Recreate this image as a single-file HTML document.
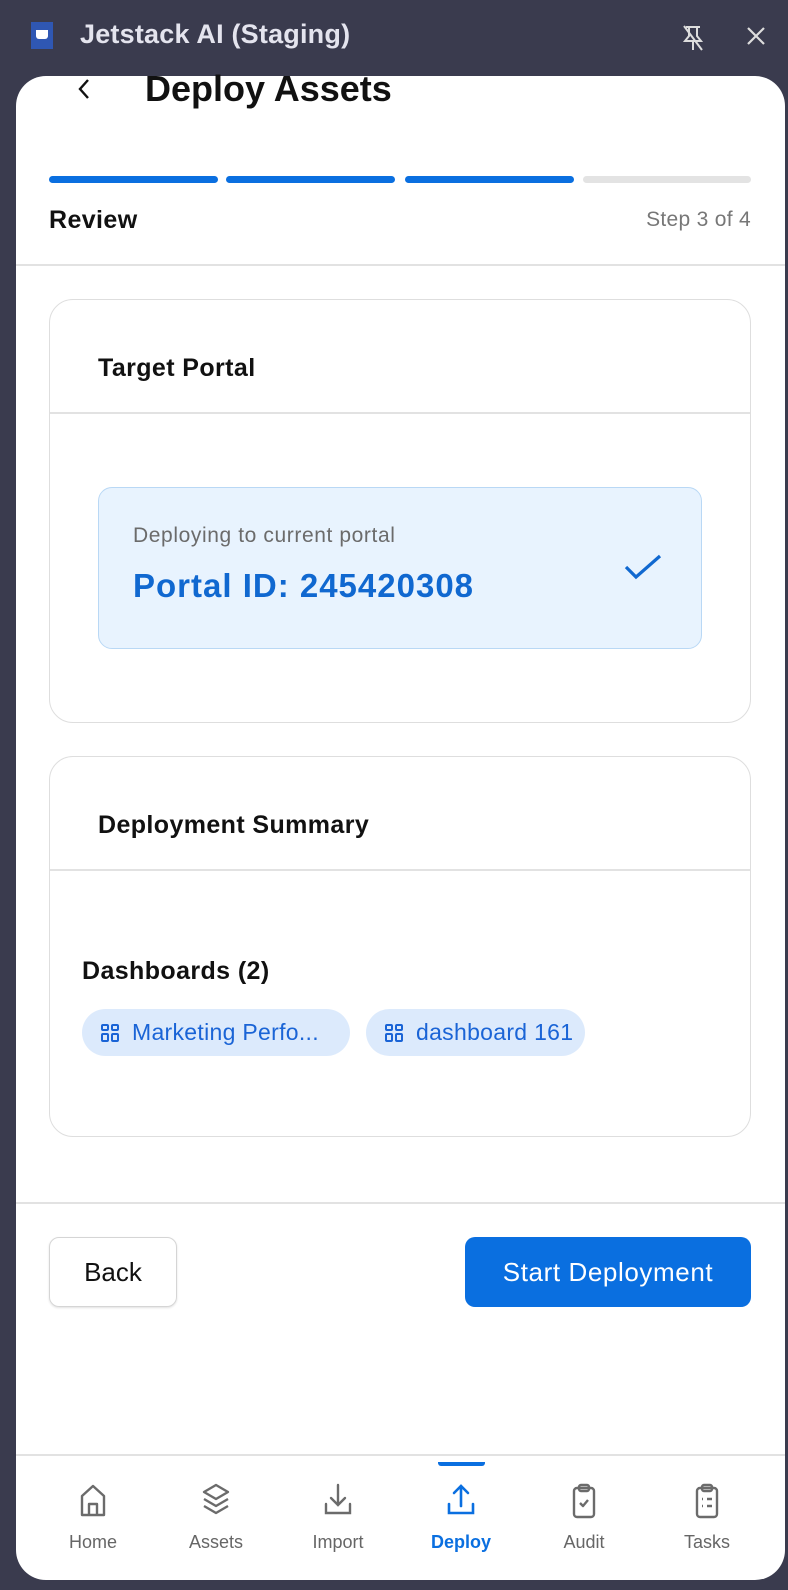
<!DOCTYPE html>
<html><head><meta charset="utf-8"><style>
*{margin:0;padding:0;box-sizing:border-box}
body{width:788px;height:1590px;background:#3a3b4e;font-family:"Liberation Sans",sans-serif;position:relative;overflow:hidden;color:#111}
.a{position:absolute}
.panel{left:16px;top:76px;width:769px;height:1504px;background:#fff;border-radius:30px;overflow:hidden}
.bar{height:7px;border-radius:4px;top:176px}
.card{left:49px;width:702px;border:1.5px solid #dedede;border-radius:24px;background:#fff}
.h{font-weight:bold;font-size:25px;letter-spacing:.4px}
.chip{height:47px;top:1009px;background:#dceafc;border-radius:24px;color:#1a64d6;font-size:23px;letter-spacing:.3px;display:flex;align-items:center;padding-left:18px;gap:12px}
.nav{top:1532px;font-size:18px;color:#666;width:100px;text-align:center;margin-left:-50px}
.ic{top:1482px;margin-left:-17px}
</style></head><body>
<div class="a" style="left:31px;top:22px;width:22px;height:27px;background:#2f57b3"></div>
<div class="a" style="left:36px;top:30px;width:12px;height:9px;background:#fff;border-radius:0 0 3px 3px"></div>
<div class="a" style="left:80px;top:19px;font-size:27px;font-weight:bold;color:#e4e4ee;letter-spacing:.2px">Jetstack AI (Staging)</div>
<svg class="a" style="left:680px;top:24px" width="26" height="28" viewBox="0 0 26 28" fill="none" stroke="#ddd" stroke-width="2"><path d="M6 3h14M9 3v9l-4 5h16l-4-5V3M13 17v9M4 2l18 24"/></svg>
<svg class="a" style="left:746px;top:26px" width="20" height="20" viewBox="0 0 20 20" stroke="#ddd" stroke-width="2.2"><path d="M2 2l16 16M18 2L2 18"/></svg>
<div class="a panel"></div>
<svg class="a" style="left:76px;top:78px" width="16" height="22" viewBox="0 0 16 22" fill="none" stroke="#111" stroke-width="2.4"><path d="M12 2L4 11l8 9"/></svg>
<div class="a" style="left:145px;top:68px;font-size:36px;font-weight:bold">Deploy Assets</div>
<div class="a bar" style="left:49px;width:169px;background:#0a6fe0"></div>
<div class="a bar" style="left:226px;width:169px;background:#0a6fe0"></div>
<div class="a bar" style="left:405px;width:169px;background:#0a6fe0"></div>
<div class="a bar" style="left:583px;width:168px;background:#e3e3e3"></div>
<div class="a h" style="left:49px;top:206px">Review</div>
<div class="a" style="right:37px;top:208px;font-size:21px;color:#777;letter-spacing:.3px">Step 3 of 4</div>
<div class="a" style="left:16px;top:264px;width:769px;height:1.5px;background:#e2e2e2"></div>

<div class="a card" style="top:299px;height:424px"></div>
<div class="a h" style="left:98px;top:354px">Target Portal</div>
<div class="a" style="left:50px;top:412px;width:700px;height:1.5px;background:#e2e2e2"></div>
<div class="a" style="left:98px;top:487px;width:604px;height:162px;background:#e8f3fe;border:1.5px solid #b9d8f5;border-radius:14px"></div>
<div class="a" style="left:133px;top:524px;font-size:21px;color:#6b6b6b;letter-spacing:.6px">Deploying to current portal</div>
<div class="a" style="left:133px;top:567px;font-size:33px;font-weight:bold;color:#1068d0;letter-spacing:1px">Portal ID: 245420308</div>
<svg class="a" style="left:623px;top:553px" width="40" height="28" viewBox="0 0 40 28" fill="none" stroke="#1068d0" stroke-width="3.2"><path d="M3 14l10 10L37 3"/></svg>

<div class="a card" style="top:756px;height:381px"></div>
<div class="a h" style="left:98px;top:811px">Deployment Summary</div>
<div class="a" style="left:50px;top:869px;width:700px;height:1.5px;background:#e2e2e2"></div>
<div class="a h" style="left:82px;top:957px">Dashboards (2)</div>
<div class="a chip" style="left:82px;width:268px"><svg width="20" height="20" viewBox="0 0 20 20" fill="none" stroke="#1a64d6" stroke-width="2"><rect x="2" y="2" width="6" height="5" rx="1"/><rect x="12" y="2" width="6" height="5" rx="1"/><rect x="2" y="11" width="6" height="7" rx="1"/><rect x="12" y="11" width="6" height="7" rx="1"/></svg>Marketing Perfo...</div>
<div class="a chip" style="left:366px;width:219px"><svg width="20" height="20" viewBox="0 0 20 20" fill="none" stroke="#1a64d6" stroke-width="2"><rect x="2" y="2" width="6" height="5" rx="1"/><rect x="12" y="2" width="6" height="5" rx="1"/><rect x="2" y="11" width="6" height="7" rx="1"/><rect x="12" y="11" width="6" height="7" rx="1"/></svg>dashboard 161</div>

<div class="a" style="left:16px;top:1202px;width:769px;height:1.5px;background:#e2e2e2"></div>
<div class="a" style="left:49px;top:1237px;width:128px;height:70px;border:1.5px solid #d5d5d5;border-radius:10px;box-shadow:0 1px 2px rgba(0,0,0,.12);font-size:26px;display:flex;align-items:center;justify-content:center">Back</div>
<div class="a" style="left:465px;top:1237px;width:286px;height:70px;background:#0a6fe0;border-radius:10px;color:#fff;font-size:26px;letter-spacing:.6px;display:flex;align-items:center;justify-content:center">Start Deployment</div>

<div class="a" style="left:16px;top:1454px;width:769px;height:1.5px;background:#e2e2e2"></div>
<div class="a" style="left:438px;top:1462px;width:47px;height:4px;background:#0a6fe0;border-radius:0 0 3px 3px"></div>
<svg class="a ic" style="left:93px" width="34" height="36" viewBox="0 0 34 36" fill="none" stroke="#6b6b6b" stroke-width="2.4" stroke-linejoin="round"><path d="M6 33V14L17 4l11 10v19zM13 33V22h8v11"/></svg>
<svg class="a ic" style="left:216px" width="34" height="38" viewBox="0 0 34 38" fill="none" stroke="#6b6b6b" stroke-width="2.4" stroke-linejoin="round"><path d="M17 3L5 10l12 7 12-7zM5 17l12 7 12-7M5 24l12 7 12-7"/></svg>
<svg class="a ic" style="left:338px" width="34" height="36" viewBox="0 0 34 36" fill="none" stroke="#6b6b6b" stroke-width="2.4" stroke-linecap="round"><path d="M17 3v20M10 16l7 7 7-7M5 22v9h24v-9"/></svg>
<svg class="a ic" style="left:461px" width="34" height="36" viewBox="0 0 34 36" fill="none" stroke="#0a6fe0" stroke-width="2.6" stroke-linecap="round"><path d="M17 24V4M10 11l7-7 7 7M5 22v9h24v-9"/></svg>
<svg class="a ic" style="left:584px" width="34" height="38" viewBox="0 0 34 38" fill="none" stroke="#6b6b6b" stroke-width="2.4" stroke-linejoin="round"><rect x="7" y="6" width="20" height="29" rx="3"/><rect x="12" y="3" width="10" height="6" rx="2"/><path d="M13 21l3 3 5-6"/></svg>
<svg class="a ic" style="left:707px" width="34" height="38" viewBox="0 0 34 38" fill="none" stroke="#6b6b6b" stroke-width="2.4" stroke-linejoin="round"><rect x="7" y="6" width="20" height="29" rx="3"/><rect x="12" y="3" width="10" height="6" rx="2"/><path d="M12 17h1M17 17h5M12 24h1M17 24h5"/></svg>
<div class="a nav" style="left:93px">Home</div>
<div class="a nav" style="left:216px">Assets</div>
<div class="a nav" style="left:338px">Import</div>
<div class="a nav" style="left:461px;color:#0a6fe0;font-weight:bold">Deploy</div>
<div class="a nav" style="left:584px">Audit</div>
<div class="a nav" style="left:707px">Tasks</div>
</body></html>
